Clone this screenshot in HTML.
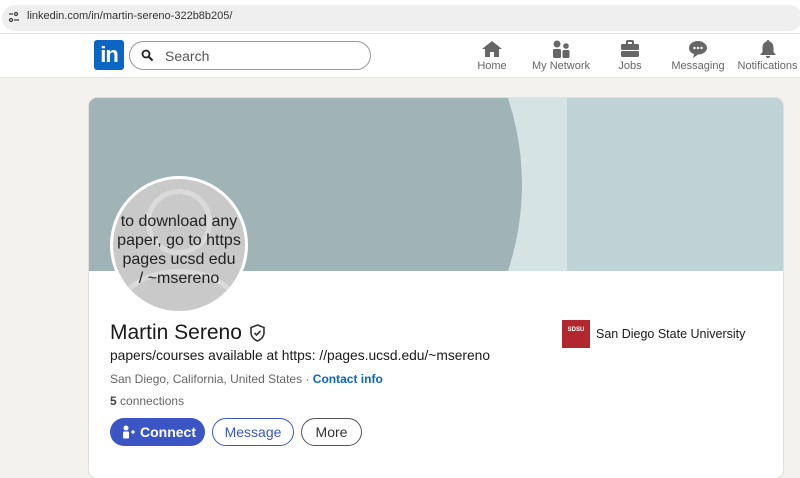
<!DOCTYPE html>
<html><head><style>
*{margin:0;padding:0;box-sizing:border-box}
body{width:800px;height:462px;overflow:hidden;background:#f4f2ee;font-family:"Liberation Sans",sans-serif;position:relative}
.abs{position:absolute}
.nav{color:#666;font-size:11px;text-align:center}
</style></head><body>
<div class="abs" style="left:0;top:0;width:800px;height:33px;background:#fff"></div>
<div class="abs" style="left:2px;top:5px;width:800px;height:26px;background:#efefef;border-radius:13px"></div>
<svg class="abs" style="left:8px;top:11px" width="12" height="12" viewBox="0 0 12 12"><g stroke="#444" stroke-width="1.3" fill="none"><line x1="1" y1="3" x2="5" y2="3"/><circle cx="8" cy="3" r="1.5"/><circle cx="3" cy="9" r="1.5"/><line x1="6" y1="9" x2="11" y2="9"/></g></svg>
<div class="abs" style="left:27px;top:10px;font-size:11px;color:#333">linkedin.com/in/martin-sereno-322b8b205/</div>
<div class="abs" style="left:0;top:33px;width:800px;height:45px;background:#fff;border-top:1px solid #e4e4e4;border-bottom:1px solid #e4e4e4"></div>
<div class="abs" style="left:94px;top:40px;width:30px;height:30px;background:#0a66c2;border-radius:3px;color:#fff;font-weight:bold;font-size:22px;line-height:30px;text-align:center;letter-spacing:-1px">in</div>
<div class="abs" style="left:129px;top:41px;width:242px;height:29px;border:1px solid #999;border-radius:15px"></div>
<svg class="abs" style="left:141px;top:49px" width="13" height="13" viewBox="0 0 13 13"><circle cx="5" cy="5" r="3.5" stroke="#222" stroke-width="1.8" fill="none"/><line x1="7.5" y1="7.5" x2="11.5" y2="11.5" stroke="#222" stroke-width="2"/></svg>
<div class="abs" style="left:165px;top:48px;font-size:14px;color:#555">Search</div>
<svg class="abs" style="left:481px;top:40px" width="22" height="18" viewBox="0 0 22 18"><path d="M11 1L1 9h3v8h5v-5h4v5h5V9h3z" fill="#666"/></svg>
<div class="abs nav" style="left:472px;top:60px;width:40px">Home</div>
<svg class="abs" style="left:551px;top:40px" width="20" height="18" viewBox="0 0 20 18"><circle cx="6" cy="4" r="3.5" fill="#666"/><circle cx="15" cy="6" r="2.8" fill="#666"/><rect x="2" y="9" width="8" height="9" rx="1.5" fill="#666"/><rect x="11.5" y="10" width="7" height="8" rx="1.5" fill="#666"/></svg>
<div class="abs nav" style="left:526px;top:60px;width:70px">My Network</div>
<svg class="abs" style="left:620px;top:40px" width="20" height="18" viewBox="0 0 20 18"><rect x="7" y="1" width="6" height="4" rx="1" fill="none" stroke="#666" stroke-width="2"/><rect x="1" y="4" width="18" height="6" rx="1.5" fill="#666"/><rect x="1" y="11" width="18" height="6" rx="1.5" fill="#666"/></svg>
<div class="abs nav" style="left:610px;top:60px;width:40px">Jobs</div>
<svg class="abs" style="left:688px;top:40px" width="20" height="19" viewBox="0 0 20 19"><path d="M10 1C5 1 1 4 1 8c0 3 2 5 5 6l-1 4 5-3.5c5 0 9-3 9-6.5S15 1 10 1z" fill="#666"/><circle cx="6.5" cy="8" r="1.2" fill="#fff"/><circle cx="10" cy="8" r="1.2" fill="#fff"/><circle cx="13.5" cy="8" r="1.2" fill="#fff"/></svg>
<div class="abs nav" style="left:668px;top:60px;width:60px">Messaging</div>
<svg class="abs" style="left:758px;top:39px" width="20" height="20" viewBox="0 0 20 20"><path d="M10 1c-1 0-1.5.7-1.5 1.5C5.5 3.5 4.5 6 4.5 9v4L2 16h16l-2.5-3V9c0-3-1-5.5-4-6.5C11.5 1.7 11 1 10 1z" fill="#666"/><path d="M8 17h4a2 2 0 01-4 0z" fill="#666"/></svg>
<div class="abs nav" style="left:735px;top:60px;width:65px">Notifications</div>

<div class="abs" style="left:89px;top:98px;width:694px;height:380px;background:#fff;border-radius:8px;overflow:hidden;box-shadow:0 0 0 1px #e0dfdc">
 <div class="abs" style="left:0;top:0;width:694px;height:173px;background:#bfd2d6"></div>
 <div class="abs" style="left:0;top:0;width:478px;height:173px;background:#d6e3e3"></div>
 <svg class="abs" style="left:0;top:0" width="478" height="173"><path d="M0 0H419Q447 86 419 173H0Z" fill="#a0b3b7"/></svg>
</div>
<div class="abs" style="left:110px;top:176px;width:138px;height:138px;border-radius:50%;background:#c9c9c9;border:3px solid #fff;overflow:hidden">
 <div class="abs" style="left:33px;top:10px;width:66px;height:66px;border-radius:50%;border:5px solid #dadada"></div>
 <div class="abs" style="left:5px;top:90px;width:122px;height:80px;border-radius:50%;border:5px solid #dadada"></div>
 <div class="abs" style="left:0;top:33px;width:132px;text-align:center;font-size:16px;line-height:19px;color:#222">to download any<br>paper, go to https<br>pages ucsd edu<br>/ ~msereno</div>
</div>
<div class="abs" style="left:110px;top:321px;font-size:21px;color:#191919">Martin Sereno</div>
<svg class="abs" style="left:249px;top:324px" width="17" height="18" viewBox="0 0 17 18"><path d="M8.5 1L2 3.5v5c0 4 3 7 6.5 8.5 3.5-1.5 6.5-4.5 6.5-8.5v-5z" fill="none" stroke="#333" stroke-width="1.6"/><path d="M5.5 9l2 2 4-4" fill="none" stroke="#333" stroke-width="1.6"/></svg>
<div class="abs" style="left:110px;top:348px;font-size:13.8px;color:#191919">papers/courses available at https: //pages.ucsd.edu/~msereno</div>
<div class="abs" style="left:110px;top:372px;font-size:12px;color:#666">San Diego, California, United States · <span style="color:#0a66c2;font-weight:bold">Contact info</span></div>
<div class="abs" style="left:110px;top:394px;font-size:12px;color:#666"><b style="color:#444">5</b> connections</div>
<div class="abs" style="left:110px;top:418px;width:95px;height:28px;border-radius:14px;background:#3b56c4;color:#fff;font-weight:bold;font-size:14px;line-height:28px;padding-left:30px">Connect</div>
<svg class="abs" style="left:122px;top:425px" width="14" height="14" viewBox="0 0 14 14"><circle cx="4" cy="3" r="2.5" fill="#fff"/><rect x="1" y="6.5" width="6" height="7" rx="1" fill="#fff"/><path d="M9 7h4M11 5v4" stroke="#fff" stroke-width="1.3"/></svg>
<div class="abs" style="left:212px;top:418px;width:82px;height:28px;border-radius:14px;border:1px solid #3b56c4;color:#3b56c4;font-size:14px;line-height:26px;text-align:center">Message</div>
<div class="abs" style="left:301px;top:418px;width:61px;height:28px;border-radius:14px;border:1px solid #555;color:#333;font-size:14px;line-height:26px;text-align:center">More</div>
<div class="abs" style="left:562px;top:320px;width:28px;height:28px;background:#b0272e;color:#fff;font-size:6px;font-weight:bold;text-align:center;padding-top:7px">SDSU</div>
<div class="abs" style="left:596px;top:327px;font-size:12.5px;color:#191919">San Diego State University</div>
</body></html>
